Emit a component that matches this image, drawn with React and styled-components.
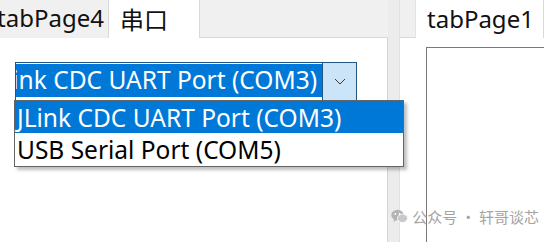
import React from "react";
import styled, { createGlobalStyle } from "styled-components";

const GlobalStyle = createGlobalStyle`
  html, body {
    margin: 0;
    padding: 0;
    background: #ffffff;
  }
  body {
    font-family: "Noto Sans", "Noto Sans CJK SC", sans-serif;
    overflow: hidden;
  }
`;

const ports = ["JLink CDC UART Port (COM3)", "USB Serial Port (COM5)"];

const App = () => {
  return (
    <>
      <GlobalStyle />
      <Window>
        <LeftPanel>
          <TabStrip>
            <Tab $clipped>tabPage4</Tab>
            <Tab $active>串口</Tab>
          </TabStrip>
          <PageBody>
            <Combo>
              <ComboField>
                <SelectedText>{ports[0]}</SelectedText>
              </ComboField>
              <ComboButton>
                <svg width="12" height="7" viewBox="0 0 12 7">
                  <path d="M1 1 L6 6 L11 1" fill="none" stroke="#3a3a3a" strokeWidth="1" />
                </svg>
              </ComboButton>
              <DropList>
                {ports.map((port, i) => (
                  <DropItem key={port} $selected={i === 0}>
                    {port}
                  </DropItem>
                ))}
              </DropList>
            </Combo>
          </PageBody>
        </LeftPanel>
        <Splitter />
        <RightPanel>
          <TabStrip>
            <Tab $active $wide>tabPage1</Tab>
          </TabStrip>
          <PageBody $right>
            <InnerBox />
          </PageBody>
        </RightPanel>
        <Watermark>
          <svg width="17" height="15" viewBox="0 0 17 15">
            <ellipse cx="6.5" cy="6" rx="6.2" ry="5.2" fill="#b4b4b4" />
            <path d="M3 10 L2.5 13 L6 10.8 Z" fill="#b4b4b4" />
            <ellipse cx="11.5" cy="9.3" rx="5" ry="4.2" fill="#c8c8c8" stroke="#fff" strokeWidth="0.8" />
            <circle cx="4.3" cy="5" r="0.9" fill="#fff" />
            <circle cx="8.6" cy="5" r="0.9" fill="#fff" />
          </svg>
          <span>公众号 · 轩哥谈芯</span>
        </Watermark>
      </Window>
    </>
  );
};

export default App;

const Window = styled.div`
  position: relative;
  display: flex;
  width: 544px;
  height: 242px;
  overflow: hidden;
  background: #f0f0f0;
`;

const LeftPanel = styled.div`
  display: flex;
  flex-direction: column;
  width: 388px;
`;

const RightPanel = styled.div`
  display: flex;
  flex-direction: column;
  flex: 1;
`;

const TabStrip = styled.div`
  display: flex;
  height: 38px;
  flex-shrink: 0;
  background: #f0f0f0;
  border-bottom: 1px solid #d9d9d9;
  box-sizing: border-box;
`;

const Tab = styled.div`
  display: flex;
  align-items: center;
  height: ${(p) => (p.$active ? "39px" : "38px")};
  box-sizing: border-box;
  font-size: 24px;
  color: #111;
  white-space: nowrap;
  overflow: hidden;
  background: ${(p) => (p.$active ? "#ffffff" : "#f0f0f0")};
  border-right: 1px solid #d9d9d9;
  width: ${(p) => (p.$clipped ? "109px" : p.$wide ? "auto" : "91px")};
  flex: ${(p) => (p.$wide ? "1" : "none")};
  justify-content: ${(p) => (p.$clipped ? "flex-end" : "flex-start")};
  padding: ${(p) => (p.$clipped ? "0 4px 3px 0" : "0 0 3px 11px")};
  margin-left: ${(p) => (p.$wide ? "15px" : "0")};
  border-left: ${(p) => (p.$wide ? "1px solid #e3e3e3" : "none")};
`;

const PageBody = styled.div`
  flex: 1;
  background: #ffffff;
  border-right: ${(p) => (p.$right ? "none" : "1px solid #d4d4d4")};
  padding: ${(p) => (p.$right ? "9px 0 0 26px" : "24px 0 0 15px")};
`;

const Splitter = styled.div`
  width: 12px;
  flex-shrink: 0;
  background: #ececec;
  border-right: 1px solid #e0e0e0;
  box-sizing: border-box;
`;

const InnerBox = styled.div`
  height: 220px;
  border-left: 1px solid #7a7a7a;
  border-top: 1px solid #7a7a7a;
`;

const Combo = styled.div`
  position: relative;
  display: flex;
  width: 342px;
  height: 39px;
  box-sizing: border-box;
  border: 1px solid #22557f;
  background: #ffffff;
`;

const ComboField = styled.div`
  flex: 1;
  display: flex;
  justify-content: flex-end;
  overflow: hidden;
  padding: 1px 0 3px 1px;
`;

const SelectedText = styled.span`
  display: flex;
  align-items: center;
  flex-shrink: 0;
  min-width: 100%;
  justify-content: flex-end;
  padding-right: 5px;
  background: #0078d7;
  color: #ffffff;
  font-size: 24.5px;
  white-space: nowrap;
  line-height: 1;
`;

const ComboButton = styled.div`
  width: 33px;
  display: flex;
  align-items: center;
  justify-content: center;
  background: #cce4f7;
  border-left: 1px solid #22557f;
`;

const DropList = styled.div`
  position: absolute;
  top: 100%;
  left: -2px;
  width: 390px;
  box-sizing: border-box;
  border: 1px solid #646464;
  background: #ffffff;
  box-shadow: 3px 3px 3px rgba(0, 0, 0, 0.25);
  padding: 0 0 1px;
  z-index: 5;
`;

const DropItem = styled.div`
  height: 32px;
  display: flex;
  align-items: center;
  padding-left: 2px;
  font-size: 24.5px;
  white-space: nowrap;
  background: ${(p) => (p.$selected ? "#0078d7" : "#ffffff")};
  color: ${(p) => (p.$selected ? "#ffffff" : "#000000")};
`;

const Watermark = styled.div`
  position: absolute;
  right: 5px;
  bottom: 15px;
  display: flex;
  align-items: center;
  gap: 4px;
  font-size: 15px;
  color: #a4a4a4;
  white-space: pre;
  font-family: "Noto Sans CJK SC", sans-serif;
`;
